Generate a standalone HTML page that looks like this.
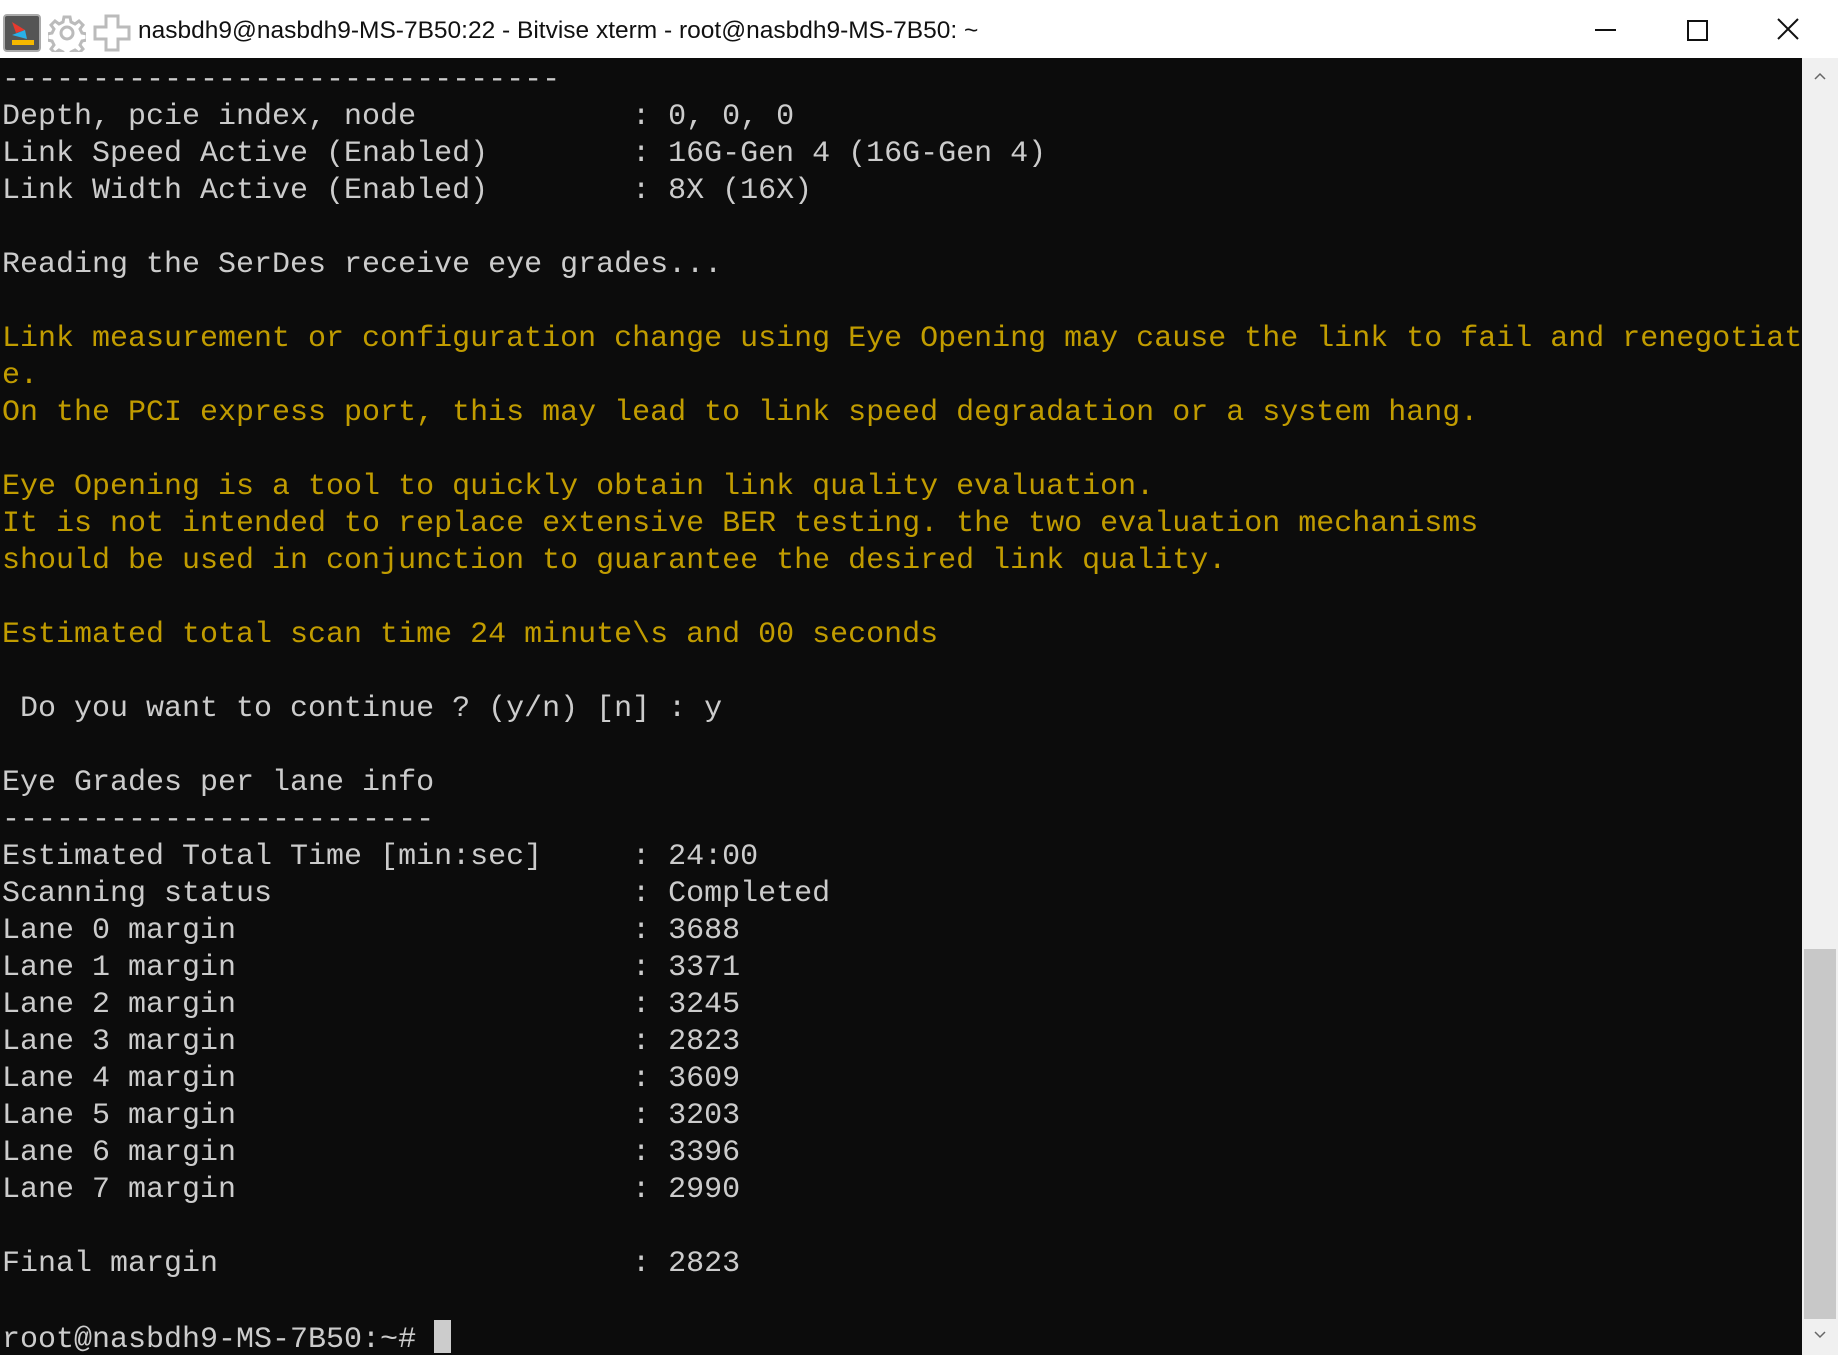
<!DOCTYPE html>
<html><head><meta charset="utf-8"><style>
html,body{margin:0;padding:0;}
body{width:1838px;height:1355px;overflow:hidden;background:#fff;position:relative;}
#title{position:absolute;left:0;top:0;width:1838px;height:58px;background:#fff;}
#title .t{position:absolute;left:138px;top:17px;font:24.5px "Liberation Sans",sans-serif;color:#111;white-space:nowrap;}
#term{position:absolute;left:0;top:58px;width:1802px;height:1297px;background:#0c0c0c;overflow:hidden;}
pre{margin:0;position:absolute;left:2px;top:4px;font-family:"Liberation Mono",monospace;font-size:30px;line-height:37px;color:#cccccc;letter-spacing:0;}
.y{color:#c19c00;}
.cur{display:inline-block;width:17px;height:33px;background:#cccccc;vertical-align:-6px;}
#sb{position:absolute;left:1802px;top:58px;width:36px;height:1297px;background:#f0f0f0;}
#thumb{position:absolute;left:2px;top:891px;width:32px;height:370px;background:#c8c8c8;}
</style></head><body>
<div id="title">
<svg style="position:absolute;left:3px;top:14px" width="38" height="38" viewBox="0 0 38 38">
<rect x="1" y="1" width="36" height="36" rx="3" fill="#555" stroke="#aaa" stroke-width="2"/>
<path d="M9 8 L22 16 L13 19 Z" fill="#e83a2e"/>
<path d="M9 21 L22 16 L24 25 Z" fill="#2ab0e8"/>
<path d="M9 26 L31 26 L31 31 L9 31 Z" fill="#f5b800"/>
</svg>
<svg style="position:absolute;left:48px;top:14px" width="38" height="38" viewBox="0 0 38 38">
<g fill="none" stroke="#bbb" stroke-width="3">
<circle cx="19" cy="19" r="6"/>
<path d="M16 3h6l1 5 4 2 4-3 4 4-3 4 2 4 5 1v6l-5 1-2 4 3 4-4 4-4-3-4 2-1 5h-6l-1-5-4-2-4 3-4-4 3-4-2-4-5-1v-6l5-1 2-4-3-4 4-4 4 3 4-2z"/>
</g></svg>
<svg style="position:absolute;left:93px;top:14px" width="38" height="38" viewBox="0 0 38 38">
<path d="M13 2h12v11h11v12H25v11H13V25H2V13h11z" fill="none" stroke="#bbb" stroke-width="3"/>
</svg>
<div class="t">nasbdh9@nasbdh9-MS-7B50:22 - Bitvise xterm - root@nasbdh9-MS-7B50: ~</div>
<div style="position:absolute;left:1595px;top:29px;width:21px;height:2px;background:#111"></div>
<div style="position:absolute;left:1687px;top:20px;width:17px;height:17px;border:2px solid #111"></div>
<svg style="position:absolute;left:1777px;top:18px" width="22" height="22"><path d="M1 1L21 21M21 1L1 21" stroke="#111" stroke-width="2"/></svg>
</div>
<div id="term"><pre>-------------------------------
Depth, pcie index, node            : 0, 0, 0
Link Speed Active (Enabled)        : 16G-Gen 4 (16G-Gen 4)
Link Width Active (Enabled)        : 8X (16X)

Reading the SerDes receive eye grades...

<span class="y">Link measurement or configuration change using Eye Opening may cause the link to fail and renegotiat
e.
On the PCI express port, this may lead to link speed degradation or a system hang.

Eye Opening is a tool to quickly obtain link quality evaluation.
It is not intended to replace extensive BER testing. the two evaluation mechanisms
should be used in conjunction to guarantee the desired link quality.

Estimated total scan time 24 minute\s and 00 seconds</span>

 Do you want to continue ? (y/n) [n] : y

Eye Grades per lane info
------------------------
Estimated Total Time [min:sec]     : 24:00
Scanning status                    : Completed
Lane 0 margin                      : 3688
Lane 1 margin                      : 3371
Lane 2 margin                      : 3245
Lane 3 margin                      : 2823
Lane 4 margin                      : 3609
Lane 5 margin                      : 3203
Lane 6 margin                      : 3396
Lane 7 margin                      : 2990

Final margin                       : 2823

root@nasbdh9-MS-7B50:~# <span class="cur"></span></pre></div>
<div id="sb">
<svg style="position:absolute;left:12px;top:14px" width="12" height="8"><path d="M1 7L6 2L11 7" fill="none" stroke="#666" stroke-width="1.5"/></svg>
<div id="thumb"></div>
<svg style="position:absolute;left:12px;top:1273px" width="12" height="8"><path d="M1 1L6 6L11 1" fill="none" stroke="#666" stroke-width="1.5"/></svg>
</div>
</body></html>
